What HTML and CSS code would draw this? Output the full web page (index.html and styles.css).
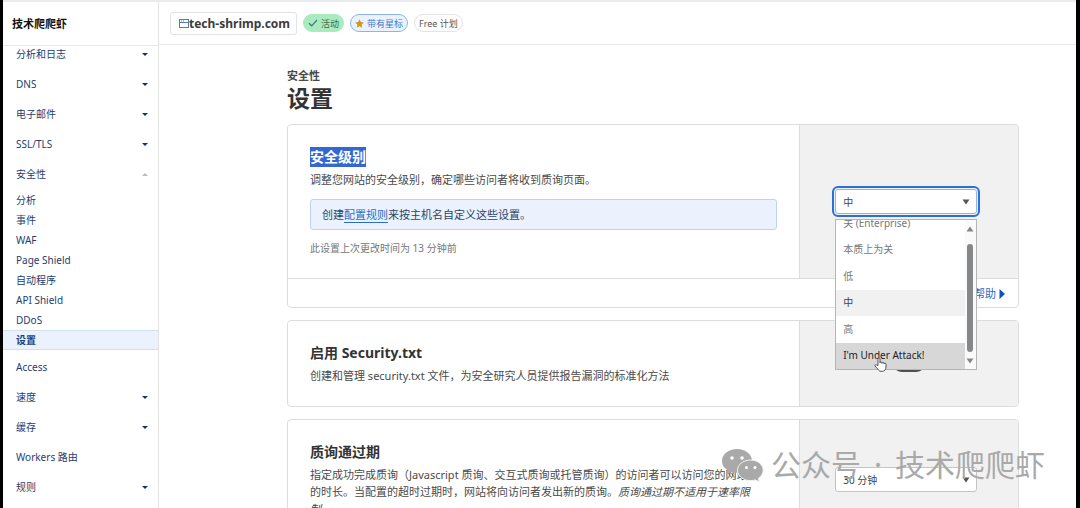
FILE: index.html
```html
<!DOCTYPE html>
<html lang="zh-CN">
<head>
    <meta charset="UTF-8">
    <meta name="viewport" content="width=device-width, initial-scale=1.0">
    <title>设置</title>
    <link rel="stylesheet" href="styles.css">
</head>
<body>
    <div class="page">
        <aside class="sidebar">
            <div class="account">技术爬爬虾</div>
            <nav class="nav">
                <ul class="nav-list">
                    <li><a class="nav-item" href="#">分析和日志<span class="caret"></span></a></li>
                    <li><a class="nav-item" href="#">DNS<span class="caret"></span></a></li>
                    <li><a class="nav-item" href="#">电子邮件<span class="caret"></span></a></li>
                    <li><a class="nav-item" href="#">SSL/TLS<span class="caret"></span></a></li>
                    <li>
                        <a class="nav-item" href="#">安全性<span class="caret caret-up"></span></a>
                        <ul class="sub-list">
                            <li><a class="sub-item" href="#">分析</a></li>
                            <li><a class="sub-item" href="#">事件</a></li>
                            <li><a class="sub-item" href="#">WAF</a></li>
                            <li><a class="sub-item" href="#">Page Shield</a></li>
                            <li><a class="sub-item" href="#">自动程序</a></li>
                            <li><a class="sub-item" href="#">API Shield</a></li>
                            <li><a class="sub-item" href="#">DDoS</a></li>
                            <li><a class="sub-item active" href="#">设置</a></li>
                        </ul>
                    </li>
                    <li><a class="nav-item" href="#">Access</a></li>
                    <li><a class="nav-item" href="#">速度<span class="caret"></span></a></li>
                    <li><a class="nav-item" href="#">缓存<span class="caret"></span></a></li>
                    <li><a class="nav-item" href="#">Workers 路由</a></li>
                    <li><a class="nav-item" href="#">规则<span class="caret"></span></a></li>
                </ul>
            </nav>
        </aside>

        <div class="content">
            <header class="topbar">
                <button class="domain" type="button">
                    <svg width="10" height="10" viewBox="0 0 10 10" fill="none" stroke="#4a7fc4">
                        <rect x="0.5" y="1.5" width="9" height="8"/>
                        <path d="M0.5 4.5h9M2 3h1M4 3h1"/>
                    </svg>tech-shrimp.com
                </button>
                <span class="chip chip-active">
                    <svg width="10" height="8" viewBox="0 0 10 8" fill="none" stroke="#2f7d8c" stroke-width="1.2"><path d="M1 4.2l2.7 2.6L9 1"/></svg>
                    活动
                </span>
                <button class="chip chip-star" type="button">
                    <svg width="9" height="9" viewBox="0 0 10 10" fill="#d09a13"><path d="M5 0.2l1.5 3.2 3.4 0.4-2.5 2.4 0.7 3.5L5 8 1.9 9.7l0.7-3.5L0.1 3.8l3.4-0.4z"/></svg>
                    带有星标
                </button>
                <span class="chip">Free 计划</span>
            </header>

            <main class="main">
                <p class="section-name">安全性</p>
                <h1>设置</h1>

                <section class="card">
                    <div class="card-row">
                        <div class="card-body">
                            <h2><mark>安全级别</mark></h2>
                            <p>调整您网站的安全级别，确定哪些访问者将收到质询页面。</p>
                            <p class="notice">创建<a href="#">配置规则</a>来按主机名自定义这些设置。</p>
                            <p class="note">此设置上次更改时间为 13 分钟前</p>
                        </div>
                        <div class="card-side">
                            <div class="select-box open">
                                <select aria-label="安全级别">
                                    <option>中</option>
                                </select>
                                <svg class="arrow" width="8" height="6" viewBox="0 0 8 6" fill="#555"><path d="M0.5 0.5h7L4 5.5z"/></svg>
                                <div class="dropdown">
                                    <ul class="options" role="listbox" aria-label="安全级别">
                                        <li role="option">关 (Enterprise)</li>
                                        <li role="option">本质上为关</li>
                                        <li role="option">低</li>
                                        <li role="option" class="selected" aria-selected="true">中</li>
                                        <li role="option">高</li>
                                        <li role="option" class="hovered">I'm Under Attack!</li>
                                    </ul>
                                    <div class="scrollbar">
                                        <svg width="8" height="6" viewBox="0 0 8 6" fill="#858789"><path d="M0.5 5.5h7L4 0.5z"/></svg>
                                        <span class="thumb"></span>
                                        <svg width="8" height="6" viewBox="0 0 8 6" fill="#858789"><path d="M0.5 0.5h7L4 5.5z"/></svg>
                                    </div>
                                </div>
                                <svg class="pointer" width="13" height="15" viewBox="0 0 13 15" fill="#fff" stroke="#555" stroke-linejoin="round">
                                    <path d="M4 8.5V1.8a1 1 0 0 1 2 0V6a1 1 0 0 1 2 0v0.4a1 1 0 0 1 2 0.2v0.4a1 1 0 0 1 2 0.3V10c0 2.6-1.5 4.3-3.8 4.3H7c-1.5 0-2.2-.7-3-1.9L1 9c-.5-1 .7-1.8 1.5-1.1z"/>
                                </svg>
                            </div>
                        </div>
                    </div>
                    <div class="card-footer">
                        <a class="help" href="#">帮助
                            <svg width="6" height="10" viewBox="0 0 6 10" fill="#0b51c5"><path d="M0.5 0L6 5l-5.5 5z"/></svg>
                        </a>
                    </div>
                </section>

                <section class="card">
                    <div class="card-row">
                        <div class="card-body">
                            <h2>启用 Security.txt</h2>
                            <p>创建和管理 security.txt 文件，为安全研究人员提供报告漏洞的标准化方法</p>
                        </div>
                        <div class="card-side">
                            <input class="toggle" type="checkbox" aria-label="启用 Security.txt">
                        </div>
                    </div>
                </section>

                <section class="card">
                    <div class="card-row">
                        <div class="card-body">
                            <h2>质询通过期</h2>
                            <p class="narrow">指定成功完成质询（Javascript 质询、交互式质询或托管质询）的访问者可以访问您的网站的时长。当配置的超时过期时，网站将向访问者发出新的质询。<em>质询通过期不适用于速率限制。</em></p>
                        </div>
                        <div class="card-side">
                            <div class="select-box">
                                <select aria-label="质询通过期">
                                    <option>30 分钟</option>
                                </select>
                                <svg class="arrow" width="8" height="6" viewBox="0 0 8 6" fill="#555"><path d="M0.5 0.5h7L4 5.5z"/></svg>
                            </div>
                        </div>
                    </div>
                </section>
            </main>
        </div>

        <div class="watermark">
            <svg width="42" height="33" viewBox="0 0 42 33">
                <path fill="#a9a9a9" d="M15 0C6.5 0 0 5.3 0 12c0 3.8 2 7 5.3 9.2L4 25.5l5-2.6c2 .6 4 .9 6 .9 8.3 0 15-5.2 15-11.9S23.3 0 15 0z"/>
                <path fill="#a9a9a9" stroke="#f4f4f4" d="M28.5 11C21.3 11 15.5 15.6 15.5 21.3s5.8 10.3 13 10.3c1.6 0 3.2-.2 4.7-.7l4.2 2-1.1-3.5c3-2 4.9-4.8 4.9-8.1C41.2 15.6 35.5 11 28.5 11z"/>
                <g fill="#fff"><circle cx="10" cy="9" r="1.8"/><circle cx="20" cy="9" r="1.8"/><circle cx="24.5" cy="18.5" r="1.5"/><circle cx="33" cy="18.5" r="1.5"/></g>
            </svg>
            <span>公众号</span>
            <span class="dot">·</span>
            <span>技术爬爬虾</span>
        </div>
    </div>
</body>
</html>
```
FILE: styles.css
```css
* {
    margin: 0;
    padding: 0;
    box-sizing: border-box;
}

body {
    font-family: "Noto Sans", "Noto Sans CJK SC", sans-serif;
    font-size: 11px;
    line-height: 17px;
    color: #4a4a4a;
    background: #fff;
}

ul {
    list-style: none;
}

button,
select {
    font-family: inherit;
    cursor: pointer;
}

.page {
    position: relative;
    display: flex;
    height: 100vh;
    overflow: hidden;
    border-left: 3px solid #000;
    border-right: 4px solid #000;
}

/* Sidebar */
.sidebar {
    display: flex;
    flex-direction: column;
    flex: 0 0 156px;
    border-top: 2px solid #ebebeb;
    border-right: 1px solid #e3e3e3;
}

.account {
    flex: 0 0 43px;
    padding: 0 9px;
    line-height: 43px;
    font-weight: bold;
    color: #111;
    border-bottom: 1px solid #e8e8e8;
}

.nav {
    flex: 1;
    min-height: 0;
    overflow: hidden;
}

/* list is scrolled a little under the account name */
.nav-list {
    margin-top: -7px;
}

.nav-item {
    display: flex;
    align-items: center;
    justify-content: space-between;
    height: 30px;
    padding: 0 10px 0 13px;
    font-size: 10px;
    color: #1f3c70;
    text-decoration: none;
}

.caret {
    border: 3px solid transparent;
    border-top-color: #0f3273;
    border-bottom: 0;
}

.caret-up {
    border-top: 0;
    border-bottom: 3px solid #bbb;
}

.sub-list {
    padding: 1px 0 2px;
}

.sub-item {
    display: block;
    height: 20px;
    padding: 0 13px;
    font-size: 10px;
    line-height: 20px;
    color: #1f3c70;
    text-decoration: none;
}

.sub-item.active {
    line-height: 18px;
    font-weight: bold;
    color: #17407f;
    background: #ebf2fe;
    border-top: 1px solid #cfdff5;
    border-bottom: 1px solid #cfdff5;
}

/* Top bar */
.content {
    flex: 1;
    min-width: 0;
    border-top: 2px solid #ebebeb;
}

.topbar {
    display: flex;
    align-items: center;
    gap: 6px;
    height: 43px;
    padding: 0 11px;
    border-bottom: 1px solid #e8e8e8;
}

.domain {
    display: flex;
    align-items: center;
    height: 23px;
    padding: 0 6px 0 8px;
    font-size: 12px;
    font-weight: bold;
    color: #3c3c3c;
    background: #fff;
    border: 1px solid #e3e3e3;
    border-radius: 3px;
}

.chip {
    display: flex;
    align-items: center;
    gap: 3px;
    height: 18px;
    padding: 0 4px;
    font-size: 9px;
    color: #555;
    background: #fff;
    border: 1px solid #e3e3e3;
    border-radius: 9px;
}

.chip-active {
    color: #3f6650;
    background: #a9eabf;
    border-color: #a9eabf;
}

.chip-star {
    color: #3a79d0;
    background: #ebf2fe;
    border-color: #8db4ea;
}

/* Settings */
.main {
    display: flex;
    flex-direction: column;
    padding: 23px 57px 0 128px;
}

.section-name {
    line-height: 16px;
    font-weight: bold;
}

h1 {
    margin-bottom: 11px;
    font-size: 23px;
    line-height: 29px;
    color: #333;
}

h2 {
    margin-bottom: 4px;
    font-size: 14px;
    line-height: 20px;
    color: #333;
}

mark {
    display: inline-block;
    color: #fff;
    background: #3367d1;
}

.card {
    margin-bottom: 12px;
    border: 1px solid #dcdcdc;
    border-radius: 4px;
}

.card-row {
    display: flex;
}

.card-body {
    flex: 1;
    padding: 22px;
}

.card-side {
    display: flex;
    flex: 0 0 30%;
    align-items: center;
    justify-content: center;
    background: #f1f1f1;
    border-left: 1px solid #dcdcdc;
    border-radius: 0 3px 3px 0;
}

.notice {
    margin: 11px 0 10px;
    padding: 6px 11px;
    color: #2b4468;
    background: #ebf2fe;
    border: 1px solid #bdd3f3;
    border-radius: 3px;
}

.notice a {
    color: #2c6cc4;
    text-underline-offset: 3px;
}

.note {
    font-size: 10px;
    line-height: 16px;
    color: #777;
}

.narrow {
    max-width: 445px;
}

.card-footer {
    display: flex;
    justify-content: flex-end;
    padding: 6px 13px 5px;
    border-top: 1px solid #dcdcdc;
}

.help {
    display: flex;
    align-items: center;
    gap: 3px;
    color: #2c6cc4;
    text-decoration: none;
}

/* Controls */
.select-box {
    position: relative;
    width: 65%;
    margin-right: 6px;
}

.select-box select {
    display: block;
    width: 100%;
    height: 25px;
    padding: 0 7px;
    font-size: 10px;
    color: #444;
    background: #fff;
    border: 1px solid #c4c4c4;
    border-radius: 3px;
    appearance: none;
}

.open select {
    border-color: #8fb4ec;
    outline: 2px solid #2a6fdb;
    outline-offset: 1px;
}

.arrow {
    position: absolute;
    top: 10px;
    right: 7px;
    pointer-events: none;
}

.dropdown {
    position: absolute;
    top: 30px;
    left: 0;
    right: 0;
    z-index: 1;
    display: flex;
    align-items: flex-end;
    height: 151px;
    overflow: hidden;
    background: #fff;
    border: 1px solid #b5b5b5;
}

.options {
    display: grid;
    grid-template-rows: repeat(6, 1fr);
    flex: 1;
    height: 159px;
}

.options li {
    display: flex;
    align-items: center;
    padding: 0 7px;
    font-size: 10px;
    color: #777;
}

.options .selected {
    color: #444;
    background: #f1f1f1;
}

.options .hovered {
    color: #222;
    background: #d8d7d8;
}

.scrollbar {
    display: flex;
    flex-direction: column;
    align-items: center;
    gap: 12px;
    flex: 0 0 11px;
    height: 100%;
    padding: 6px 0 5px;
    background: #fafafa;
}

.thumb {
    flex: 1;
    width: 6px;
    background: #858789;
    border-radius: 3px;
}

.scrollbar .thumb + svg {
    margin-top: -6px;
}

.pointer {
    position: absolute;
    top: 168px;
    left: 39px;
    z-index: 2;
}

.toggle {
    width: 32px;
    height: 17px;
    background: radial-gradient(circle at 8px 8px, #fff 6px, #505050 7px);
    border-radius: 9px;
    appearance: none;
}

/* Account mark laid over the page */
.watermark {
    position: absolute;
    right: 31px;
    bottom: 22px;
    z-index: 2;
    display: flex;
    align-items: center;
    gap: 7px;
    font-size: 30px;
    line-height: 42px;
    color: #a9a9a9;
    pointer-events: none;
}

.dot {
    padding: 0 6px;
}
```
